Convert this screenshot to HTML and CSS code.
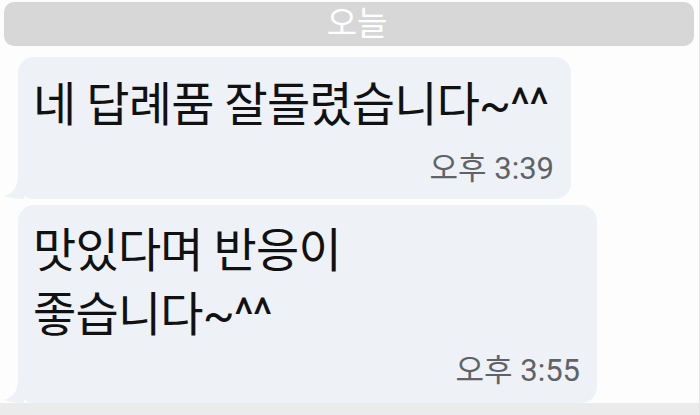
FILE: index.html
```html
<!DOCTYPE html>
<html lang="ko">
<head>
    <meta charset="UTF-8">
    <meta name="viewport" content="width=device-width, initial-scale=1.0">
    <title>대화</title>
    <link rel="stylesheet" href="styles.css">
</head>
<body>
    <div class="screen">
        <!-- Date divider -->
        <div class="date-bar">오늘</div>

        <!-- Messages -->
        <div class="chat">
            <div class="bubble first">
                <svg class="tail" width="20" height="24" viewBox="0 0 20 24">
                    <path d="M14 0 C14 12 9 19 0 21 C6 23 13 24 20 24 L20 0 Z" />
                </svg>
                <div class="text">네 답례품 잘돌렸습니다~^^</div>
                <div class="time">오후 3:39</div>
            </div>
            <div class="bubble second">
                <svg class="tail" width="20" height="24" viewBox="0 0 20 24">
                    <path d="M14 0 C14 12 9 19 0 21 C6 23 13 24 20 24 L20 0 Z" />
                </svg>
                <div class="text">맛있다며 반응이<br>좋습니다~^^</div>
                <div class="time">오후 3:55</div>
            </div>
        </div>
        <div class="bottom-band"></div>
    </div>
</body>
</html>
```

FILE: styles.css
```css
/* Global Styles */
body {
    margin: 0;
    padding: 0;
    background-color: #fdfdfd;
    font-family: Roboto, 'Noto Sans CJK KR', sans-serif;
    color: #111;
}

.screen {
    width: 700px;
    height: 415px;
    overflow: hidden;
    display: flex;
    flex-direction: column;
    border-right: 1px solid #e4e4e4;
    box-sizing: border-box;
}

/* Date divider */
.date-bar {
    margin: 2px 5px 0 4px;
    padding-left: 16px;
    height: 45px;
    line-height: 44px;
    background-color: #d7d7d7;
    border-radius: 10px;
    color: #fff;
    font-size: 33px;
    text-align: center;
}

/* Messages */
.chat {
    display: flex;
    flex-direction: column;
    align-items: flex-start;
    gap: 6px;
    padding: 11px 0 0 18px;
    flex: 1;
}

.bubble {
    position: relative;
    background-color: #eef1f5;
    border-radius: 16px;
    box-sizing: border-box;
}

.bubble .tail {
    position: absolute;
    left: -14px;
    bottom: 0;
    fill: #eef1f5;
}

.bubble.first {
    width: 553px;
    height: 142px;
    padding: 16px 17px 0 15px;
}

.bubble.second {
    width: 579px;
    height: 198px;
    padding: 14px 17px 0 15px;
}

.text {
    font-size: 47px;
    line-height: 64px;
    letter-spacing: -0.8px;
}

.time {
    text-align: right;
    font-size: 31px;
    line-height: 36px;
    color: #5f6368;
}

.bubble.first .time {
    margin-top: 14px;
}

.bubble.second .time {
    margin-top: 6px;
}

.bottom-band {
    height: 12px;
    background-color: #ebebeb;
}
```
